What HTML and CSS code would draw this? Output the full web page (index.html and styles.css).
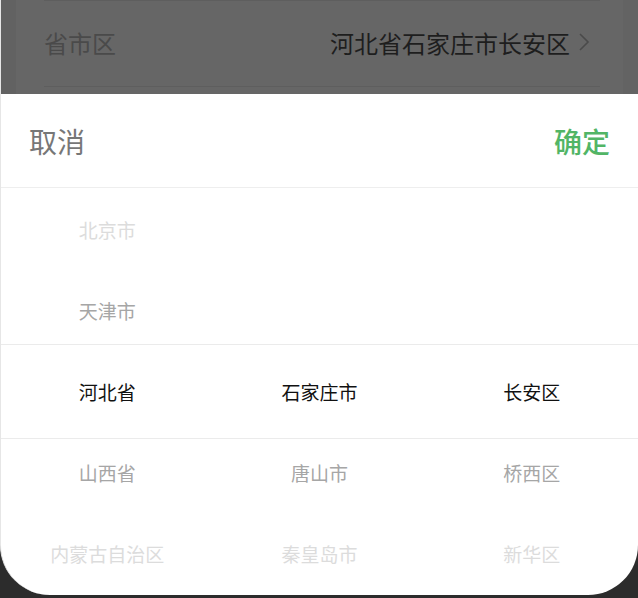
FILE: index.html
```html
<!doctype html>
<html>
<head>
<meta charset="utf-8">
<meta name="viewport" content="width=device-width, initial-scale=1.0">
<link rel="stylesheet" href="styles.css">
<title>省市区选择</title>
</head>
<body>
<div class="screen">
	<div class="backdrop">
		<div class="cell">
			<span class="cell-label">省市区</span>
			<span class="cell-value">河北省石家庄市长安区</span>
			<svg class="cell-arrow" width="12" height="18" viewBox="0 0 12 18"><polyline points="2,1 10,9 2,17" fill="none" stroke="#4a4a4a" stroke-width="1.6"/></svg>
		</div>
	</div>
	<div class="sheet">
		<div class="sheet-head">
			<span class="btn-cancel">取消</span>
			<span class="btn-ok">确定</span>
		</div>
		<div class="picker">
			<div class="picker-col">
				<div class="item far">北京市</div>
				<div class="item near">天津市</div>
				<div class="item on">河北省</div>
				<div class="item near">山西省</div>
				<div class="item far">内蒙古自治区</div>
			</div>
			<div class="picker-col">
				<div class="item"></div>
				<div class="item"></div>
				<div class="item on">石家庄市</div>
				<div class="item near">唐山市</div>
				<div class="item far">秦皇岛市</div>
			</div>
			<div class="picker-col">
				<div class="item"></div>
				<div class="item"></div>
				<div class="item on">长安区</div>
				<div class="item near">桥西区</div>
				<div class="item far">新华区</div>
			</div>
			<div class="picker-band"></div>
		</div>
	</div>
</div>
</body>
</html>
```

FILE: styles.css
```css
*{margin:0;padding:0;box-sizing:border-box;}
body {
	font-family:"Noto Sans CJK SC","Noto Sans",sans-serif;
	background-color:#2c2c2c;
	width:638px;
	height:598px;
	overflow:hidden;
}
.screen {
	height:595px;
	background-color:#fff;
	border-radius:0 0 50px 50px;
	overflow:hidden;
	border-left:1px solid #e6e6e6;
}

/* page behind the mask */
.backdrop {
	height:94px;
	background-color:#666;
	padding:0 38px 0 43px;
	box-shadow:inset 15px 0 0 #626262, inset -15px 0 0 #636363;
}
.cell {
	height:87px;
	display:flex;
	align-items:center;
	border-top:1px solid #5e5e5e;
	border-bottom:1px solid #5e5e5e;
	padding-right:10px;
	padding-bottom:3px;
}
.cell-label {
	font-size:24px;
	color:#4a4a4a;
	flex:1;
}
.cell-value {
	font-size:24px;
	color:#1e1e1e;
}
.cell-arrow {
	margin-left:8px;
}

/* bottom sheet */
.sheet-head {
	height:94px;
	display:flex;
	align-items:center;
	justify-content:space-between;
	padding:0 28px;
	border-bottom:1px solid #eee;
	font-size:28px;
}
.btn-cancel {color:#777;}
.btn-ok {color:#52b566;font-weight:500;}

.picker {
	position:relative;
	display:grid;
	grid-template-columns:1fr 1fr 1fr;
	padding-top:1px;
}
.item {
	height:81px;
	line-height:81px;
	text-align:center;
	font-size:19px;
	color:#111;
	white-space:nowrap;
}
.item.near {color:#a6a6a6;}
.item.far {color:#dcdcdc;}
.picker-band {
	position:absolute;
	left:0;
	right:0;
	top:156px;
	height:95px;
	border-top:1px solid #ebebeb;
	border-bottom:1px solid #ebebeb;
	pointer-events:none;
}
```
